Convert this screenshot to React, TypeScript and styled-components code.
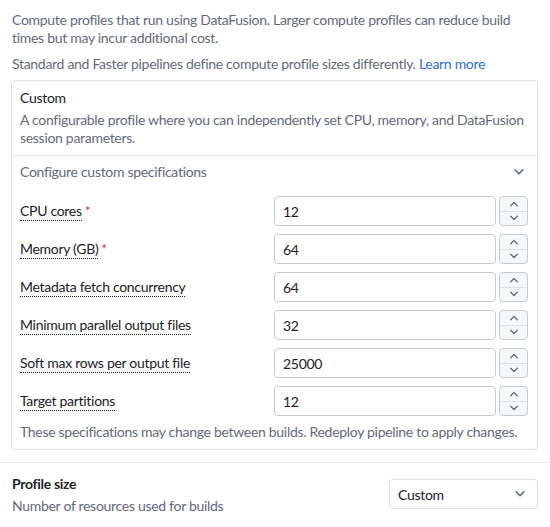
import styled, { createGlobalStyle } from 'styled-components'

const GlobalStyle = createGlobalStyle`
  html, body {
    margin: 0;
    padding: 0;
    background: #ffffff;
  }
  body {
    font-family: Lato, "Noto Sans", sans-serif;
    font-size: 14px;
    letter-spacing: -0.3px;
    color: #1c2127;
  }
  * { box-sizing: border-box; }
`

type Spec = { label: string; value: string; required?: boolean }

const specs: Spec[] = [
  { label: 'CPU cores', value: '12', required: true },
  { label: 'Memory (GB)', value: '64', required: true },
  { label: 'Metadata fetch concurrency', value: '64' },
  { label: 'Minimum parallel output files', value: '32' },
  { label: 'Soft max rows per output file', value: '25000' },
  { label: 'Target partitions', value: '12' },
]

const Chevron = ({ up = false, size = 12 }: { up?: boolean; size?: number }) => (
  <svg width={size} height={size} viewBox="0 0 16 16" fill="none">
    <path
      d={up ? 'M3.5 10.5 8 6l4.5 4.5' : 'M3.5 5.5 8 10l4.5-4.5'}
      stroke="#5f6b7c"
      strokeWidth="1.8"
      strokeLinecap="round"
      strokeLinejoin="round"
    />
  </svg>
)

export default function App() {
  return (
    <>
      <GlobalStyle />
      <Page>
        <Intro>
          <Text>
            Compute profiles that run using DataFusion. Larger compute profiles can reduce build
            times but may incur additional cost.
          </Text>
          <Text>
            Standard and Faster pipelines define compute profile sizes differently.{' '}
            <Link href="#">Learn more</Link>
          </Text>
        </Intro>

        <Card>
          <CardHead>
            <CardTitle>Custom</CardTitle>
            <CardDesc>
              A configurable profile where you can independently set CPU, memory, and DataFusion
              session parameters.
            </CardDesc>
          </CardHead>
          <CardBody>
            <SectionToggle>
              <span>Configure custom specifications</span>
              <Chevron size={14} />
            </SectionToggle>
            <Rows>
              {specs.map(s => (
                <Row key={s.label}>
                  <Label>
                    <Dotted>{s.label}</Dotted>
                    {s.required && <Star>*</Star>}
                  </Label>
                  <NumberField>
                    <Input defaultValue={s.value} />
                    <Stepper>
                      <StepButton type="button"><Chevron up /></StepButton>
                      <StepButton type="button"><Chevron /></StepButton>
                    </Stepper>
                  </NumberField>
                </Row>
              ))}
            </Rows>
            <Note>
              These specifications may change between builds. Redeploy pipeline to apply changes.
            </Note>
          </CardBody>
        </Card>

        <Footer>
          <div>
            <FooterTitle>Profile size</FooterTitle>
            <FooterDesc>Number of resources used for builds</FooterDesc>
          </div>
          <Select>
            <span>Custom</span>
            <Chevron size={14} />
          </Select>
        </Footer>
      </Page>
    </>
  )
}

const Page = styled.div`
  width: 550px;
  height: 527px;
  overflow: hidden;
`

const Intro = styled.div`
  padding: 11px 12px 7px;
  display: flex;
  flex-direction: column;
  gap: 8px;
`

const Text = styled.p`
  margin: 0;
  line-height: 18px;
  color: #5f6b7c;
`

const Link = styled.a`
  color: #2d72d2;
  text-decoration: none;
`

const Card = styled.section`
  margin: 0 12px 0 11px;
  border: 1px solid #dce0e5;
  border-radius: 4px;
`

const CardHead = styled.div`
  padding: 8px 8px 8px;
  border-bottom: 1px solid #e5e8eb;
`

const CardTitle = styled.div`
  line-height: 18px;
  color: #1c2127;
  margin-bottom: 4px;
`

const CardDesc = styled.div`
  line-height: 18px;
  color: #5f6b7c;
`

const CardBody = styled.div`
  padding: 7px 9px 8px 8px;
`

const SectionToggle = styled.div`
  display: flex;
  align-items: center;
  justify-content: space-between;
  line-height: 18px;
  color: #5f6b7c;
  padding-right: 2px;
`

const Rows = styled.div`
  display: flex;
  flex-direction: column;
  gap: 8px;
  margin-top: 15px;
`

const Row = styled.div`
  display: flex;
  align-items: center;
  justify-content: space-between;
  height: 30px;
`

const Label = styled.div`
  color: #1c2127;
  line-height: 18px;
`

const Dotted = styled.span`
  border-bottom: 1px dotted #1c2127;
  padding-bottom: 1px;
`

const Star = styled.span`
  color: #cd4246;
  margin-left: 3px;
`

const NumberField = styled.div`
  display: flex;
  gap: 3px;
  width: 254px;
`

const Input = styled.input`
  flex: 1;
  min-width: 0;
  height: 30px;
  border: 1px solid #c5cbd3;
  border-radius: 4px;
  padding: 0 8px;
  font: inherit;
  letter-spacing: inherit;
  color: #1c2127;
  outline: none;
`

const Stepper = styled.div`
  width: 29px;
  height: 30px;
  display: flex;
  flex-direction: column;
  border: 1px solid #c5cbd3;
  border-radius: 4px;
  overflow: hidden;
  background: #f6f7f9;
`

const StepButton = styled.button`
  flex: 1;
  padding: 0;
  border: none;
  background: transparent;
  display: grid;
  place-items: center;
  cursor: pointer;

  & + & {
    border-top: 1px solid #dce0e5;
  }
`

const Note = styled.div`
  margin-top: 7px;
  line-height: 18px;
  color: #5f6b7c;
`

const Footer = styled.div`
  margin-top: 12px;
  border-top: 1px solid #e5e8eb;
  padding: 12px 12px 0;
  display: flex;
  align-items: flex-start;
  justify-content: space-between;
`

const FooterTitle = styled.div`
  font-weight: 700;
  line-height: 18px;
  color: #1c2127;
`

const FooterDesc = styled.div`
  margin-top: 4px;
  line-height: 18px;
  color: #5f6b7c;
`

const Select = styled.div`
  margin-top: 4px;
  width: 149px;
  height: 30px;
  border: 1px solid #dce0e5;
  border-radius: 4px;
  display: flex;
  align-items: center;
  justify-content: space-between;
  padding: 0 10px 0 8px;
  color: #1c2127;
`
